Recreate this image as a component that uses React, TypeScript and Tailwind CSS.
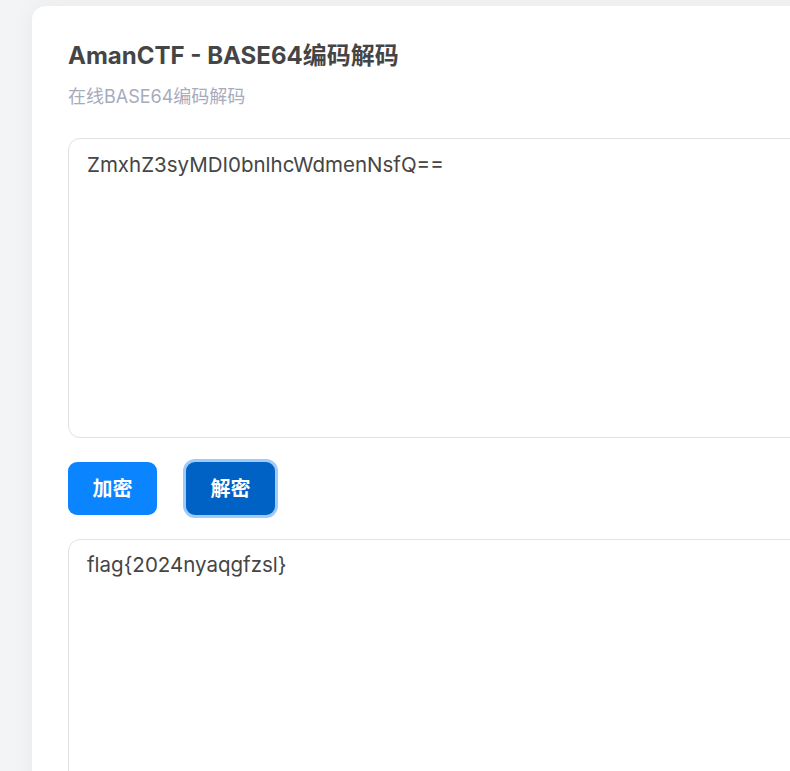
import React, { useState } from "react";

// Simple BASE64 encode/decode panel
const font = { fontFamily: "Inter, 'Noto Sans CJK SC', sans-serif" };

export default function App() {
  const [input, setInput] = useState("ZmxhZ3syMDI0bnlhcWdmenNsfQ==");
  const [output, setOutput] = useState("flag{2024nyaqgfzsl}");

  const encode = () => {
    try {
      setOutput(btoa(unescape(encodeURIComponent(input))));
    } catch {
      setOutput("");
    }
  };

  const decode = () => {
    try {
      setOutput(decodeURIComponent(escape(atob(input))));
    } catch {
      setOutput("");
    }
  };

  return (
    <div className="w-screen h-screen overflow-hidden bg-[#f3f4f6]" style={font}>
      <div className="pt-[6px] pl-[32px]">
        <div className="w-[1000px] min-h-[900px] bg-white rounded-[14px] shadow-[0_0_24px_rgba(0,0,0,0.05)] px-[36px] pt-[32px]">
          <h1 className="text-[24px] leading-[36px] font-bold text-[#454545]">AmanCTF - BASE64编码解码</h1>
          <p className="mt-[11px] text-[18px] leading-[24px] text-[#a6abbd]">在线BASE64编码解码</p>

          <textarea
            value={input}
            onChange={(e) => setInput(e.target.value)}
            className="mt-[29px] block w-full h-[300px] resize-none rounded-[12px] border border-[#e2e2e2] px-[18px] pt-[11px] text-[20.5px] leading-[30px] text-[#454545] outline-none"
          />

          <div className="mt-[24px] flex items-center gap-[29px]">
            <button
              type="button"
              onClick={encode}
              className="w-[89px] h-[53px] rounded-[9px] bg-[#0a85ff] text-white text-[20px] font-bold"
            >
              加密
            </button>
            <button
              type="button"
              onClick={decode}
              className="w-[89px] h-[53px] rounded-[9px] bg-[#0062c4] text-white text-[20px] font-bold ring-[3px] ring-[#9ecbfa]"
            >
              解密
            </button>
          </div>

          <textarea
            value={output}
            onChange={(e) => setOutput(e.target.value)}
            className="mt-[24px] block w-full h-[300px] resize-none rounded-[12px] border border-[#e2e2e2] px-[18px] pt-[10px] text-[20.5px] leading-[30px] text-[#454545] outline-none"
          />
        </div>
      </div>
    </div>
  );
}
